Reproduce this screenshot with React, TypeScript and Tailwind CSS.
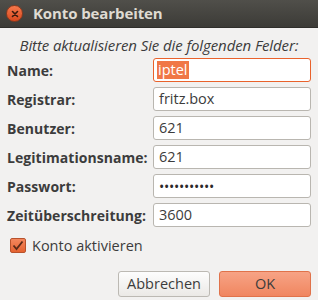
import React from "react";

interface Field {
  label: string;
  value: string;
  focused?: boolean;
  password?: boolean;
}

const fields: Field[] = [
  { label: "Name:", value: "iptel", focused: true },
  { label: "Registrar:", value: "fritz.box" },
  { label: "Benutzer:", value: "621" },
  { label: "Legitimationsname:", value: "621" },
  { label: "Passwort:", value: "•••••••••••", password: true },
  { label: "Zeitüberschreitung:", value: "3600" },
];

export default function App() {
  return (
    <div
      className="w-[318px] h-[300px] bg-[#f2f1f0] text-[#3c3c3c] overflow-hidden"
      style={{ fontFamily: '"Open Sans", "DejaVu Sans", sans-serif' }}
    >
      {/* title bar */}
      <div className="h-[28px] flex items-center bg-gradient-to-b from-[#504f4a] to-[#3c3b37] border-b border-[#2f2e2b]">
        <div className="ml-[6px] w-[17px] h-[17px] rounded-full bg-gradient-to-b from-[#f5784b] to-[#d9481c] border border-[#8a3a1e] flex items-center justify-center">
          <svg width="8" height="8" viewBox="0 0 8 8">
            <path d="M1.5 1.5 L6.5 6.5 M6.5 1.5 L1.5 6.5" stroke="#3a1a0e" strokeWidth="1.6" strokeLinecap="round" />
          </svg>
        </div>
        <span className="ml-[10px] text-[15px] font-bold text-[#dfdbd2] tracking-[-0.1px]">Konto bearbeiten</span>
      </div>

      <div className="text-center italic text-[15px] mt-[7px] leading-[20px] tracking-[-0.1px]">
        Bitte aktualisieren Sie die folgenden Felder:
      </div>

      <div className="mt-[3px] pl-[7px] pr-[7px] flex flex-col gap-[5px]">
        {fields.map((f) => (
          <div key={f.label} className="flex items-center h-[24px]">
            <div className="w-[146px] text-[14px] font-bold tracking-[0.05px]">{f.label}</div>
            <div
              className={`flex-1 h-[24px] rounded-[3px] bg-white border flex items-center px-[5px] text-[14.5px] ${
                f.focused ? "border-[#e9622c]" : "border-[#b9b6b0]"
              }`}
            >
              {f.focused ? (
                <span className="bg-[#f07746] text-white leading-[18px] -ml-[2px] px-[1px]">{f.value}</span>
              ) : f.password ? (
                <span className="flex text-[14px] text-[#2a2a2a]">
                  {f.value.split("").map((c, i) => (
                    <span key={i} className="inline-block w-[5px] text-center">
                      {c}
                    </span>
                  ))}
                </span>
              ) : (
                f.value
              )}
            </div>
          </div>
        ))}
      </div>

      <div className="mt-[8px] ml-[10px] flex items-center gap-[6px]">
        <div className="w-[16px] h-[15px] rounded-[2px] bg-gradient-to-b from-[#f3875d] to-[#e5622f] border border-[#b8522c] flex items-center justify-center">
          <svg width="12" height="11" viewBox="0 0 12 11">
            <path d="M1.5 5.5 L4.5 9 L10.5 1.5" fill="none" stroke="#5a2a18" strokeWidth="1.8" />
          </svg>
        </div>
        <span className="text-[14.5px]">Konto aktivieren</span>
      </div>

      <div className="mt-[14px] pr-[7px] flex justify-end gap-[9px]">
        <button className="w-[92px] h-[26px] rounded-[3px] border border-[#bcb9b3] bg-gradient-to-b from-[#fdfdfd] to-[#ebe9e6] text-[14.5px] text-[#3c3c3c]">
          Abbrechen
        </button>
        <button className="w-[92px] h-[26px] rounded-[3px] border border-[#e0724a] bg-gradient-to-b from-[#f7a385] to-[#f08660] text-[14.5px] text-[#3c3c3c]">
          OK
        </button>
      </div>
    </div>
  );
}
